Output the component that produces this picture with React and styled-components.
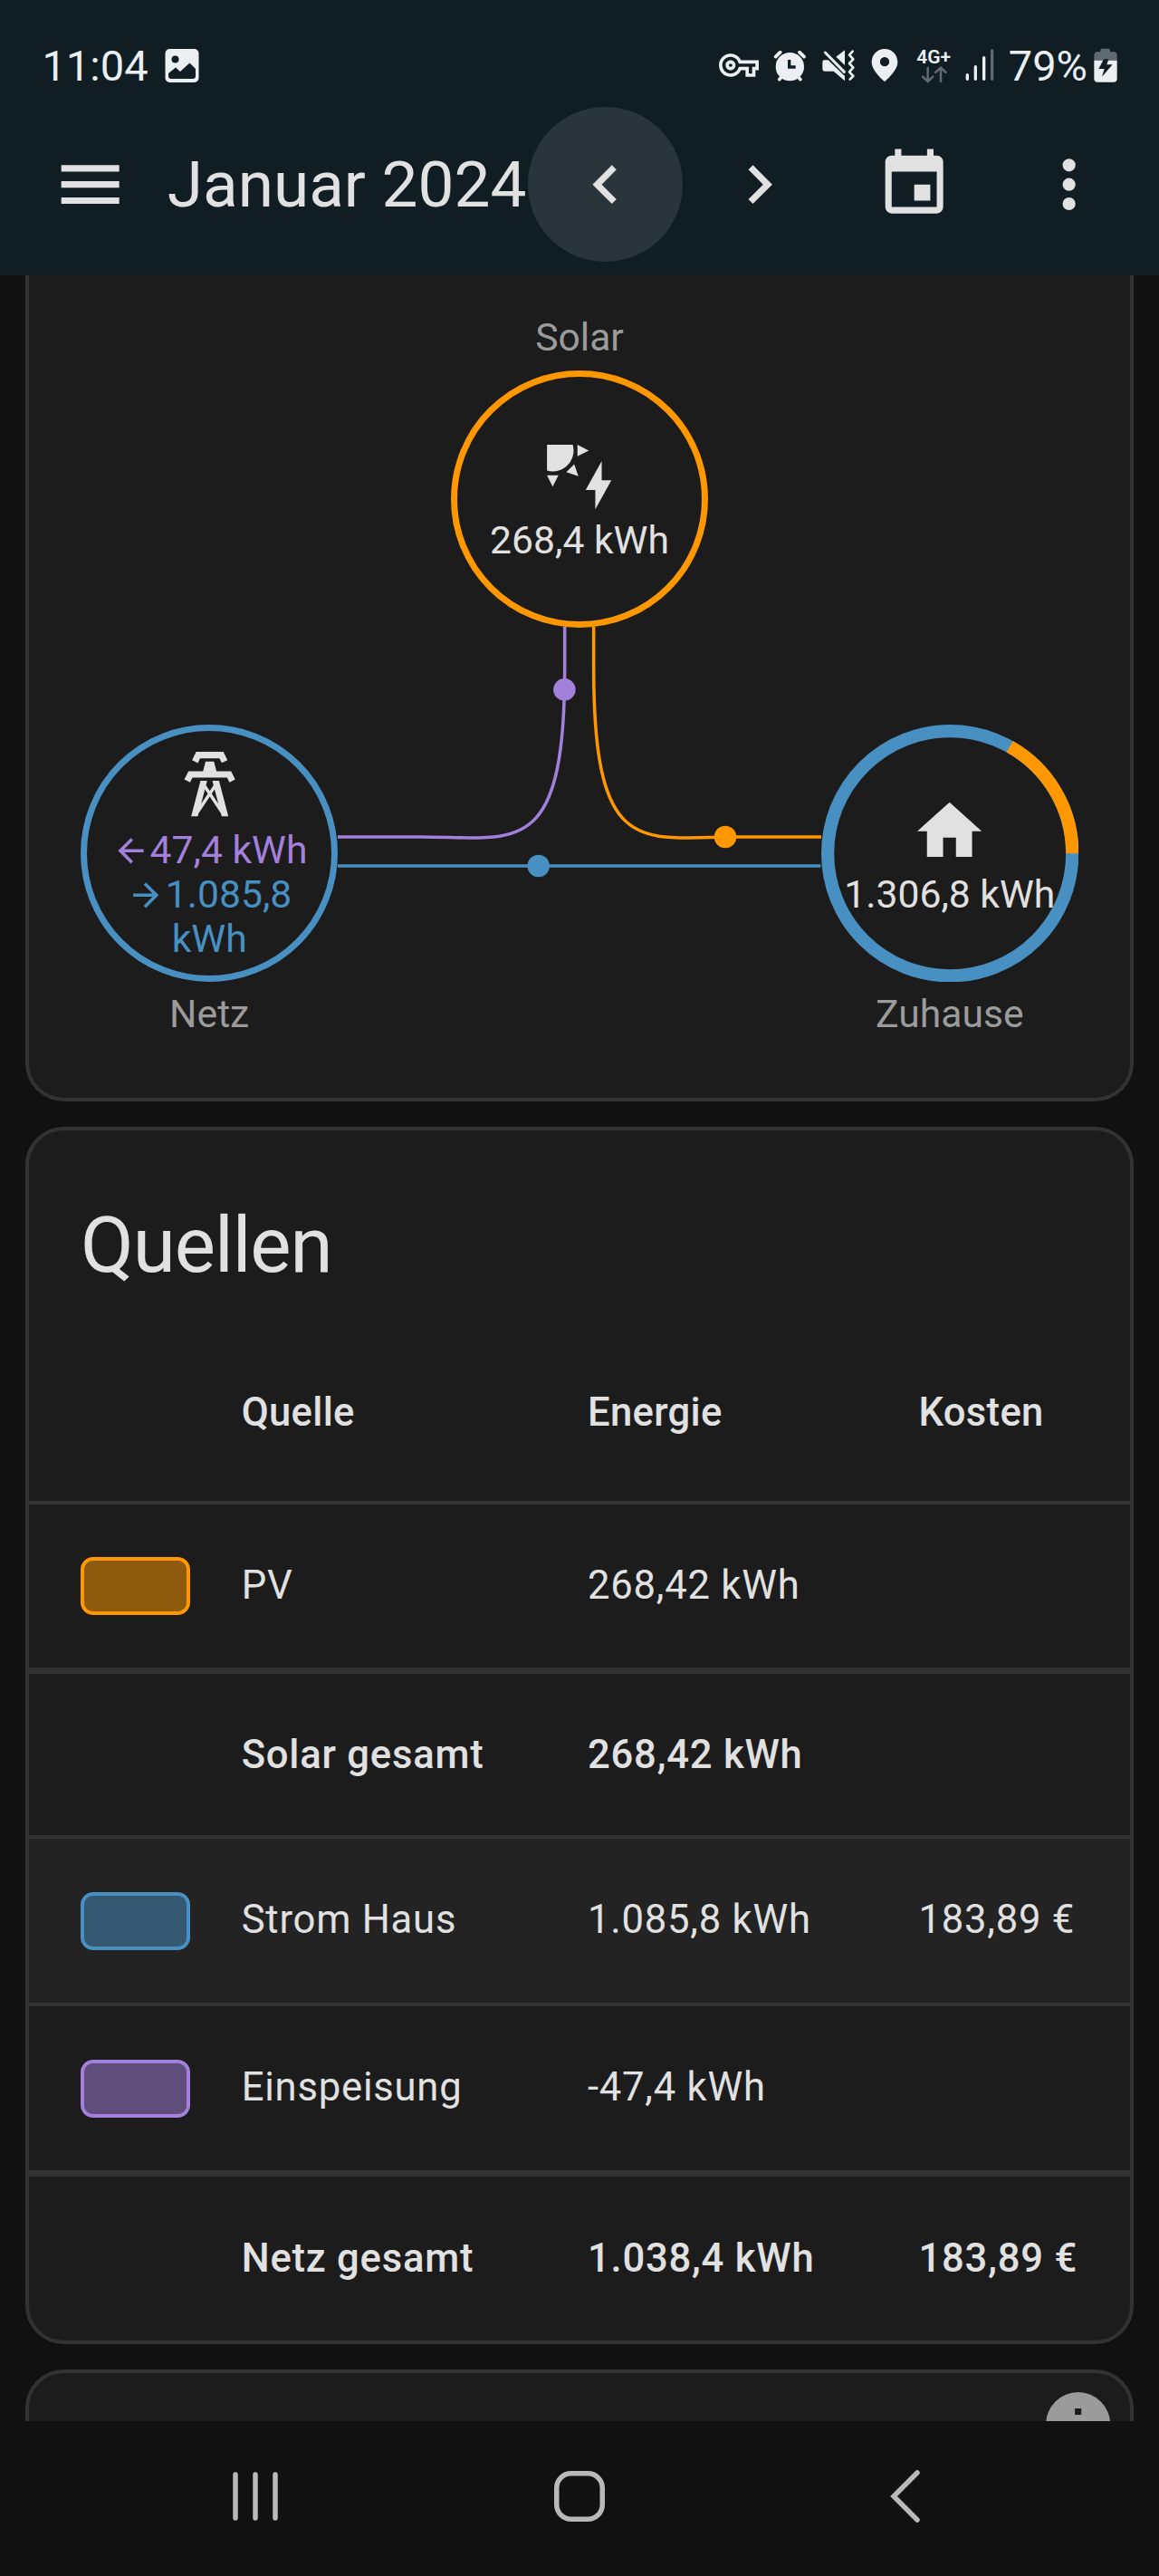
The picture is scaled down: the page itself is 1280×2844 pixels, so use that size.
import React from "react";
import styled, { createGlobalStyle } from "styled-components";

const color = {
  page: "#111111",
  card: "#1c1c1c",
  rowActive: "#232323",
  divider: "#333333",
  header: "#101e24",
  ripple: "#2a353b",
  text: "#e1e1e1",
  muted: "#9b9b9b",
  status: "#eceff1",
  statusDim: "#5f6a70",
  nav: "#b9b9b9",
  solar: "#ff9800",
  grid: "#488fc2",
  feed: "#a280db",
};

const GlobalStyle = createGlobalStyle`
  body {
    margin: 0;
    background: ${color.page};
    color: ${color.text};
    font-family: Roboto, "Liberation Sans", sans-serif;
  }
  svg { display: block; flex: none; }
`;

const Screen = styled.div`
  width: 1280px;
  height: 2844px;
  display: flex;
  flex-direction: column;
  overflow: hidden;
`;

const Header = styled.header`
  height: 304px;
  flex: none;
  box-sizing: border-box;
  padding-top: 52px;
  background: ${color.header};
`;

const StatusBar = styled.div`
  height: 40px;
  display: flex;
  justify-content: space-between;
  padding: 0 46px 0 46.5px;
  color: ${color.status};
`;

const StatusGroup = styled.div`
  display: flex;
  align-items: flex-start;
`;

const StatusText = styled.span`
  font-size: 47px;
  line-height: 42px;
  white-space: nowrap;
  margin-left: ${(p) => p.$gap || 0}px;
`;

const StatusGlyph = styled.svg`
  height: 40px;
  margin-left: ${(p) => p.$gap || 0}px;
`;

const Network = styled.div`
  width: 40px;
  margin-left: 20px;
  display: flex;
  flex-direction: column;
`;

const NetworkLabel = styled.span`
  height: 20px;
  font-size: 21px;
  line-height: 23px;
  font-weight: 600;
  white-space: nowrap;
`;

const Toolbar = styled.div`
  display: flex;
  align-items: center;
  margin-top: 26px;
  height: 171px;
  padding: 0 14.4px 0 14.2px;
`;

const IconButton = styled.button`
  width: 170.67px;
  height: 170.67px;
  flex: none;
  border: 0;
  padding: 0;
  border-radius: 50%;
  display: flex;
  align-items: center;
  justify-content: center;
  color: inherit;
  background: ${(p) => (p.$pressed ? color.ripple : "transparent")};
`;

const PageTitle = styled.h1`
  flex: 1;
  margin: 0;
  font-size: 71.1px;
  line-height: 84px;
  font-weight: 400;
  white-space: nowrap;
`;

const Content = styled.main`
  height: 2369px;
  flex: none;
  overflow: hidden;
  padding: 0 28px;
  display: flex;
  flex-direction: column;
  gap: 28px;
`;

const Card = styled.section`
  flex: none;
  box-sizing: border-box;
  overflow: hidden;
  background: ${color.card};
  border: 4px solid ${color.divider};
  border-radius: 42.67px;
`;

const FlowCard = styled(Card)`
  height: 912px;
  border-top: 0;
  border-top-left-radius: 0;
  border-top-right-radius: 0;
`;

const InfoCard = styled(Card)`
  height: 200px;
  display: flex;
  justify-content: flex-end;
  padding: 14px 14.5px 0;
  color: ${color.muted};
`;

const Flow = styled.div`
  position: relative;
  padding: 47px 57px 0;
  display: flex;
  flex-direction: column;
  gap: 106.6px;
`;

const FlowRow = styled.div`
  display: flex;
  justify-content: ${(p) => (p.$center ? "center" : "space-between")};
`;

const FlowLines = styled.svg`
  position: absolute;
  left: 341.3px;
  top: 388px;
  width: 533.33px;
  height: 320px;
`;

const Node = styled.div`
  width: 284.4px;
  display: flex;
  flex-direction: column;
  align-items: center;
  gap: ${(p) => p.$gap || 14}px;
`;

const NodeLabel = styled.span`
  font-size: 42.67px;
  line-height: 43px;
  color: ${color.muted};
`;

const NodeCircle = styled.div`
  position: relative;
  width: 284.4px;
  height: 284.4px;
  box-sizing: border-box;
  border: 7.1px solid ${(p) => p.$ring || "transparent"};
  border-radius: 50%;
  display: flex;
  flex-direction: column;
  align-items: center;
  justify-content: center;
`;

const Ring = styled.svg`
  position: absolute;
  left: -7px;
  top: -7px;
  width: 284.4px;
  height: 284.4px;
`;

const NodeValue = styled.span`
  position: relative;
  margin-top: 6px;
  font-size: 42.67px;
  line-height: 43px;
  white-space: nowrap;
`;

const Transfers = styled.div`
  display: flex;
  flex-direction: column;
  margin-top: 6px;
`;

const Transfer = styled.div`
  display: flex;
  justify-content: center;
  align-items: center;
  font-size: 42.67px;
  line-height: 49px;
  white-space: nowrap;
  color: ${(p) => p.$tone};
`;

const CardTitle = styled.h2`
  margin: 0;
  padding: 77px 57px 35px;
  font-size: 85.33px;
  line-height: 100px;
  font-weight: 400;
  letter-spacing: -0.012em;
`;

const Row = styled.div`
  height: ${(p) => p.$height || 185}px;
  box-sizing: border-box;
  display: grid;
  grid-template-columns: 234.7px 382.3px 365.5px 1fr;
  align-items: center;
  border-top: ${(p) => p.$line ?? 4}px solid ${color.divider};
  background: ${(p) => (p.$active ? color.rowActive : "transparent")};
  font-size: 43.6px;
  line-height: 50px;
  letter-spacing: ${(p) => (p.$head ? 0.0071 : 0.0178)}em;
  font-weight: ${(p) => (p.$strong ? 500 : 400)};
  white-space: nowrap;
`;

const Cell = styled.span`
  padding-top: 2px;
  padding-bottom: ${(p) => p.$lift || 0}px;
`;

const Swatch = styled.span`
  box-sizing: border-box;
  width: 121px;
  height: 64px;
  margin-left: 57px;
  border: 4px solid ${(p) => p.$tone};
  border-radius: 14px;
  background: ${(p) => p.$tone}80;
  background-clip: padding-box;
`;

const NavBar = styled.nav`
  flex: 1;
  display: grid;
  grid-template-columns: repeat(3, 359.5px);
  justify-content: center;
  justify-items: center;
  align-items: start;
  padding-top: 53px;
`;

const MDI = {
  menu: "M3,6H21V8H3V6M3,11H21V13H3V11M3,16H21V18H3V16Z",
  left: "M15.41,16.58L10.83,12L15.41,7.41L14,6L8,12L14,18L15.41,16.58Z",
  right: "M8.59,16.58L13.17,12L8.59,7.41L10,6L16,12L10,18L8.59,16.58Z",
  calendar:
    "M19,19H5V8H19M16,1V3H8V1H6V3H5C3.89,3 3,3.89 3,5V19A2,2 0 0,0 5,21H19A2,2 0 0,0 21,19V5C21,3.89 20.1,3 19,3H18V1M17,12H12V17H17V12Z",
  dots: "M12,16A2,2 0 0,1 14,18A2,2 0 0,1 12,20A2,2 0 0,1 10,18A2,2 0 0,1 12,16M12,10A2,2 0 0,1 14,12A2,2 0 0,1 12,14A2,2 0 0,1 10,12A2,2 0 0,1 12,10M12,4A2,2 0 0,1 14,6A2,2 0 0,1 12,8A2,2 0 0,1 10,6A2,2 0 0,1 12,4Z",
  solar:
    "M11.45,2V5.55L15,3.77L11.45,2M10.45,8L8,10.46L11.75,11.71L10.45,8M2,11.45L3.77,15L5.55,11.45H2M10,2H2V10C2.57,10.17 3.17,10.25 3.77,10.25C7.35,10.26 10.26,7.35 10.27,3.75C10.26,3.16 10.17,2.57 10,2M17,22V16H14L19,7V13H22L17,22Z",
  home: "M10,20V14H14V20H19V12H22L12,3L2,12H5V20H10Z",
  tower:
    "M8.28,5.45L6.5,4.55L7.76,2H16.23L17.5,4.55L15.72,5.44L15,4H9L8.28,5.45M18.62,8H14.09L13.3,5H10.7L9.91,8H5.38L4.1,10.55L5.89,11.44L6.62,10H17.38L18.1,11.45L19.89,10.56L18.62,8M17.77,22H15.7L15.46,21.1L12,15.9L8.53,21.1L8.3,22H6.23L9.12,11H11.19L10.83,12.35L12,14.1L13.16,12.35L12.81,11H14.88L17.77,22M11.4,15L10.5,13.65L9.32,18.13L11.4,15M14.68,18.12L13.5,13.64L12.6,15L14.68,18.12Z",
  arrowLeft:
    "M20,11V13H8L13.5,18.5L12.08,19.92L4.16,12L12.08,4.08L13.5,5.5L8,11H20Z",
  arrowRight:
    "M4,11V13H16L10.5,18.5L11.92,19.92L19.84,12L11.92,4.08L10.5,5.5L16,11H4Z",
  info: "M13,9H11V7H13M13,17H11V11H13M12,2A10,10 0 0,0 2,12A10,10 0 0,0 12,22A10,10 0 0,0 22,12A10,10 0 0,0 12,2Z",
};

function Icon({ name, size = 85.33 }) {
  return (
    <svg width={size} height={size} viewBox="0 0 24 24" fill="currentColor">
      <path d={MDI[name]} />
    </svg>
  );
}

function StatusIcons() {
  return (
    <StatusGroup>
      <StatusGlyph width="44" viewBox="0 1.1 24 21.82" fill="currentColor">
        <path d="M22 19h-6v-4h-2.68c-1.14 2.42-3.6 4-6.32 4-3.86 0-7-3.14-7-7s3.14-7 7-7c2.72 0 5.17 1.58 6.32 4H24v6h-2v4zm-4-2h2v-4h2v-2H11.94l-.23-.67C11.01 8.34 9.11 7 7 7c-2.76 0-5 2.24-5 5s2.24 5 5 5c2.11 0 4.01-1.34 4.71-3.33l.23-.67H18v4zM7 15c-1.65 0-3-1.35-3-3s1.35-3 3-3 3 1.35 3 3-1.35 3-3 3zm0-4c-.55 0-1 .45-1 1s.45 1 1 1 1-.45 1-1-.45-1-1-1z" />
      </StatusGlyph>
      <StatusGlyph $gap={16} width="36" viewBox="220 36 108 120" fill="none" stroke="currentColor" strokeLinecap="round">
        <circle cx="275" cy="101" r="47" fill="currentColor" stroke="none" />
        <path d="M228 68L243 53M322 68L307 53" strokeWidth="11" />
        <path d="M240 143L250 132M310 143L300 132" strokeWidth="11" />
        <path d="M273 78V102H294" stroke={color.header} strokeWidth="10" strokeLinecap="butt" />
      </StatusGlyph>
      <StatusGlyph $gap={17} width="38" viewBox="380 36 114 120" fill="currentColor">
        <path d="M458 46V96L429 68Z" />
        <path d="M390 79H403L458 132V148L421 116H391Q384 116 384 109V86Q384 79 390 79Z" />
        <path d="M393 54L456 118" stroke="currentColor" strokeWidth="9" strokeLinecap="round" />
        <path d="M484 50L473 62L486 76L473 90L486 104L473 118L486 132L475 143" fill="none" stroke="currentColor" strokeWidth="8" strokeLinecap="round" strokeLinejoin="round" />
      </StatusGlyph>
      <StatusGlyph $gap={17} width="30" viewBox="544 36 90 120" fill="currentColor">
        <path fillRule="evenodd" d="M589 42C565 42 546 61 546 86C546 115 589 150 589 150S632 115 632 86C632 61 613 42 589 42ZM589 69A15.500 15.500 0 1 1 589 100A15.500 15.500 0 1 1 589 69Z" />
      </StatusGlyph>
      <Network>
        <NetworkLabel>4G+</NetworkLabel>
        <svg width="40" height="20" viewBox="694 98 120 60" fill="none" stroke={color.statusDim} strokeWidth="7.500" strokeLinecap="round">
          <path d="M732 107V152M715 136L732 152L749 136M775 151V106M757 122L775 106L792 122" />
        </svg>
      </Network>
      <StatusGlyph $gap={14} width="32" viewBox="856 36 96 120" stroke="currentColor" strokeWidth="10" strokeLinecap="round">
        <path d="M863 128V142M890 101V142M918 71V142" />
        <path d="M945 48V142" stroke={color.statusDim} />
      </StatusGlyph>
      <StatusText $gap={15.5}>79%</StatusText>
      <StatusGlyph $gap={7} width="26" viewBox="1281 36 78 120" fill="currentColor">
        <path d="M1303 52V46Q1303 41 1308 41H1330Q1335 41 1335 46V52H1348Q1358 52 1358 64V80H1282V64Q1282 52 1292 52Z" fill={color.statusDim} />
        <path d="M1282 80H1358V140Q1358 152 1346 152H1294Q1282 152 1282 140Z" />
        <path d="M1314 76H1330L1324 94H1343L1308 134L1316 108H1297Z" fill={color.header} />
      </StatusGlyph>
    </StatusGroup>
  );
}

function EnergyFlow() {
  return (
    <FlowCard>
      <Flow>
        <FlowLines viewBox="0 6.5 100 60" fill="none" strokeWidth="0.667">
          <path d="M47,0v15c0,40 -10,35 -30,35h-20" stroke={color.feed} />
          <path d="M53,0v15c0,40 10,35 30,35h25" stroke={color.solar} />
          <path d="M0,56H100" stroke={color.grid} />
          <circle cx="46.950" cy="19.500" r="2.300" fill={color.feed} />
          <circle cx="80.250" cy="50" r="2.300" fill={color.solar} />
          <circle cx="41.570" cy="56" r="2.300" fill={color.grid} />
        </FlowLines>
        <FlowRow $center>
          <Node $gap={15}>
            <NodeLabel>Solar</NodeLabel>
            <NodeCircle $ring={color.solar}>
              <Icon name="solar" />
              <NodeValue>268,4 kWh</NodeValue>
            </NodeCircle>
          </Node>
        </FlowRow>
        <FlowRow>
          <Node>
            <NodeCircle $ring={color.grid}>
              <Icon name="tower" />
              <Transfers>
                <Transfer $tone={color.feed}>
                  <Icon name="arrowLeft" size={42.67} />
                  47,4 kWh
                </Transfer>
                <Transfer $tone={color.grid}>
                  <Icon name="arrowRight" size={42.67} />
                  1.085,8
                </Transfer>
                <Transfer $tone={color.grid}>kWh</Transfer>
              </Transfers>
            </NodeCircle>
            <NodeLabel>Netz</NodeLabel>
          </Node>
          <Node>
            <NodeCircle>
              <Ring viewBox="0 0 80 80" fill="none" strokeWidth="4">
                <circle cx="40" cy="40" r="38" stroke={color.grid} />
                <path d="M78 40A38 38 0 0 0 58.560 6.840" stroke={color.solar} />
              </Ring>
              <Icon name="home" />
              <NodeValue>1.306,8 kWh</NodeValue>
            </NodeCircle>
            <NodeLabel>Zuhause</NodeLabel>
          </Node>
        </FlowRow>
      </Flow>
    </FlowCard>
  );
}

const rows = [
  { name: "PV", energy: "268,42 kWh", tone: color.solar, height: 184 },
  { name: "Solar gesamt", energy: "268,42 kWh", total: true },
  { name: "Strom Haus", energy: "1.085,8 kWh", cost: "183,89 €", tone: color.grid, active: true },
  { name: "Einspeisung", energy: "-47,4 kWh", tone: color.feed },
  { name: "Netz gesamt", energy: "1.038,4 kWh", cost: "183,89 €", total: true, height: 188, lift: 2 },
];

function Sources() {
  return (
    <Card>
      <CardTitle>Quellen</CardTitle>
      <Row $height={197} $line={0} $strong $head>
        <span />
        <Cell>Quelle</Cell>
        <Cell>Energie</Cell>
        <Cell>Kosten</Cell>
      </Row>
      {rows.map((r) => {
        const lift = r.lift ?? (r.total ? 1 : 3);
        return (
          <Row
            key={r.name}
            $height={r.height}
            $line={r.total ? 7 : 4}
            $strong={r.total}
            $active={r.active}
          >
            {r.tone ? <Swatch $tone={r.tone} /> : <span />}
            <Cell $lift={lift}>{r.name}</Cell>
            <Cell $lift={lift}>{r.energy}</Cell>
            <Cell $lift={lift}>{r.cost}</Cell>
          </Row>
        );
      })}
    </Card>
  );
}

export default function App() {
  return (
    <Screen>
      <GlobalStyle />
      <Header>
        <StatusBar>
          <StatusGroup>
            <StatusText>11:04</StatusText>
            <StatusGlyph $gap={18} width="38" viewBox="0 0 38 40">
              <rect x="0.500" y="2" width="37" height="37" rx="5" fill="currentColor" />
              <circle cx="11.500" cy="13.500" r="4" fill={color.header} />
              <path d="M4 29L12 22.500L17 27L27.500 17.500L34 24V32Q34 35 31 35H7Q4 35 4 32Z" fill={color.header} />
            </StatusGlyph>
          </StatusGroup>
          <StatusIcons />
        </StatusBar>
        <Toolbar>
          <IconButton><Icon name="menu" /></IconButton>
          <PageTitle>Januar 2024</PageTitle>
          <IconButton $pressed><Icon name="left" /></IconButton>
          <IconButton><Icon name="right" /></IconButton>
          <IconButton><Icon name="calendar" /></IconButton>
          <IconButton><Icon name="dots" /></IconButton>
        </Toolbar>
      </Header>
      <Content>
        <EnergyFlow />
        <Sources />
        <InfoCard><Icon name="info" /></InfoCard>
      </Content>
      <NavBar>
        <svg width="54" height="60" viewBox="0 0 54 60" stroke={color.nav} strokeWidth="5.500" strokeLinecap="round">
          <path d="M6 6V54M28 6V54M50 6V54" />
        </svg>
        <svg width="60" height="60" viewBox="0 0 60 60" fill="none" stroke={color.nav} strokeWidth="5.500">
          <rect x="4.750" y="4.750" width="50.500" height="50.500" rx="16" />
        </svg>
        <svg width="36" height="60" viewBox="0 0 36 60" fill="none" stroke={color.nav} strokeWidth="5.500" strokeLinecap="round">
          <path d="M31 4L5 30L31 56" />
        </svg>
      </NavBar>
    </Screen>
  );
}
